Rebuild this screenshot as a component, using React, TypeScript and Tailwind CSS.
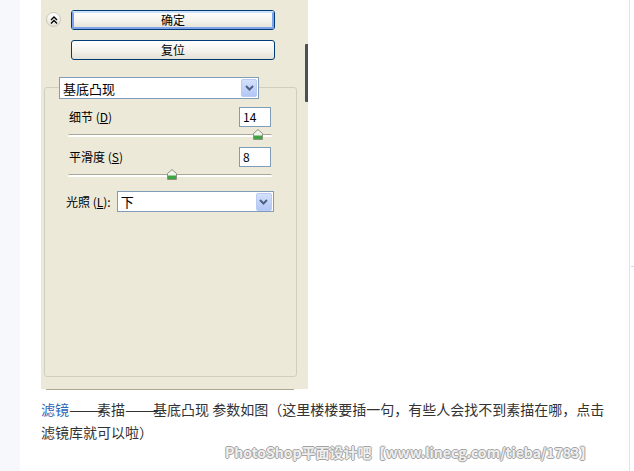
import React from 'react'

const ui = { fontFamily: '"Noto Sans CJK SC", "Noto Sans", sans-serif' }

function ComboArrow({ className = '' }: { className?: string }) {
  return (
    <div
      className={`flex items-center justify-center rounded-[2px] border border-[#b9cbf3] bg-gradient-to-b from-[#d4e1fc] to-[#b2c7f5] ${className}`}
    >
      <svg width="9" height="6" viewBox="0 0 9 6">
        <path d="M1 1 L4.5 4.5 L8 1" fill="none" stroke="#4d6185" strokeWidth="2" />
      </svg>
    </div>
  )
}

function Combo({ value, className = '' }: { value: string; className?: string }) {
  return (
    <div className={`flex items-center border border-[#7f9db9] bg-white pl-[3px] pr-[1px] ${className}`}>
      <span className="flex-1 text-[13px] leading-none text-black">{value}</span>
      <ComboArrow className="h-[18px] w-[16px]" />
    </div>
  )
}

function XpButton({ label, focused }: { label: string; focused?: boolean }) {
  return (
    <div className="h-[20px] w-[204px] rounded-[3px] border border-[#003c74] bg-gradient-to-b from-white via-[#f5f4ee] to-[#e3e1d6]">
      <div
        className={`flex h-full w-full items-center justify-center rounded-[2px] text-[12px] leading-none text-black ${
          focused ? 'border-2 border-[#7ea2ec] border-t-[#cde0fb]' : ''
        }`}
      >
        {label}
      </div>
    </div>
  )
}

function Slider({ pos }: { pos: number }) {
  return (
    <div className="relative h-[10px] w-[204px]">
      <div className="absolute left-0 right-0 top-[4px] h-[3px] rounded-full border-t border-[#a9a798] bg-white" />
      <svg
        className="absolute top-[-1px]"
        style={{ left: pos - 5 }}
        width="10"
        height="11"
        viewBox="0 0 10 11"
      >
        <path d="M5 0.5 L9.5 4.5 L9.5 10.5 L0.5 10.5 L0.5 4.5 Z" fill="#f3f3ee" stroke="#8c9480" />
        <rect x="1" y="6.5" width="8" height="3.5" fill="#3fa544" />
      </svg>
    </div>
  )
}

function Field({ value }: { value: string }) {
  return (
    <div className="flex h-[20px] w-[32px] items-center border border-[#7f9db9] bg-white pl-[3px] text-[12px] leading-none text-black">
      {value}
    </div>
  )
}

function Panel() {
  return (
    <div className="relative h-[389px] w-[267px] bg-[#ece9d8]" style={ui}>
      <div className="absolute right-0 top-[44px] h-[58px] w-[3px] rounded-l-[1px] bg-[#4b4f56]" />

      <div className="flex items-start pt-[10px]">
        <div className="ml-[5px] mt-[2px] flex h-[15px] w-[15px] items-center justify-center rounded-full border border-[#c9c7bb] bg-gradient-to-b from-white to-[#e4e2d8]">
          <svg width="8" height="8" viewBox="0 0 8 8">
            <path d="M1 4 L4 1 L7 4 M1 7.5 L4 4.5 L7 7.5" fill="none" stroke="#000" strokeWidth="1.3" />
          </svg>
        </div>
        <div className="ml-[10px] flex flex-col gap-[10px]">
          <XpButton label="确定" focused />
          <XpButton label="复位" />
        </div>
      </div>

      <Combo value="基底凸现" className="relative z-10 ml-[18px] mt-[17px] h-[22px] w-[200px]" />

      <div className="ml-[3px] mt-[-12px] h-[290px] w-[253px] rounded-[3px] border border-[#d0cfbf]">
        <div className="ml-[23px] mt-[19px] flex w-[203px] items-center justify-between">
          <span className="pl-[1px] text-[12px] text-black">
            细节 (<span className="underline">D</span>)
          </span>
          <Field value="14" />
        </div>
        <div className="ml-[23px] mt-[3px]">
          <Slider pos={190} />
        </div>

        <div className="ml-[23px] mt-[7px] flex w-[203px] items-center justify-between">
          <span className="pl-[1px] text-[12px] text-black">
            平滑度 (<span className="underline">S</span>)
          </span>
          <Field value="8" />
        </div>
        <div className="ml-[23px] mt-[3px]">
          <Slider pos={104} />
        </div>

        <div className="ml-[21px] mt-[11px] flex items-center gap-[6px]">
          <span className="text-[12px] text-black">
            光照 (<span className="underline">L</span>):
          </span>
          <Combo value="下" className="h-[21px] w-[157px]" />
        </div>
      </div>

      <div className="absolute bottom-[-1px] left-[5px] h-[1px] w-[248px] bg-[#aaa793]" />
    </div>
  )
}

// em dashes render narrow in this font, stretch them to two full-width cells
function Dash() {
  return (
    <span className="inline-block w-[28px] whitespace-nowrap align-top">
      <span className="inline-block origin-left scale-x-[1.45]">——</span>
    </span>
  )
}

export default function App() {
  return (
    <div className="relative flex h-[471px] w-[634px] overflow-hidden bg-white">
      <div className="h-full w-[20px] bg-[#f7f8fc]" />
      <div className="flex h-full w-[610px] flex-col border-r border-[#e2e3e8] pl-[21px]">
        <Panel />
        <p
          className="mt-[9px] w-[570px] text-[14px] leading-[23px] text-[#333]"
          style={ui}
        >
          <span className="text-[#2a63b8]">滤镜</span>
          <Dash />
          素描
          <Dash />
          基底凸现 参数如图（这里楼楼要插一句，有些人会找不到素描在哪，点击滤镜库就可以啦）
        </p>
      </div>
      <div className="absolute right-0 top-[266px] h-[1px] w-[3px] bg-[#d8d8dc]" />
      <div
        className="absolute left-[225px] top-[444px] whitespace-nowrap text-[14px] font-bold leading-[16px] text-[#efefef] [text-shadow:1px_0_#a3a3a3,-1px_0_#a3a3a3,0_1px_#a3a3a3,0_-1px_#a3a3a3]"
        style={ui}
      >
        PhotoShop平面设计吧【www.linecg.com/tieba/1783】
      </div>
    </div>
  )
}
